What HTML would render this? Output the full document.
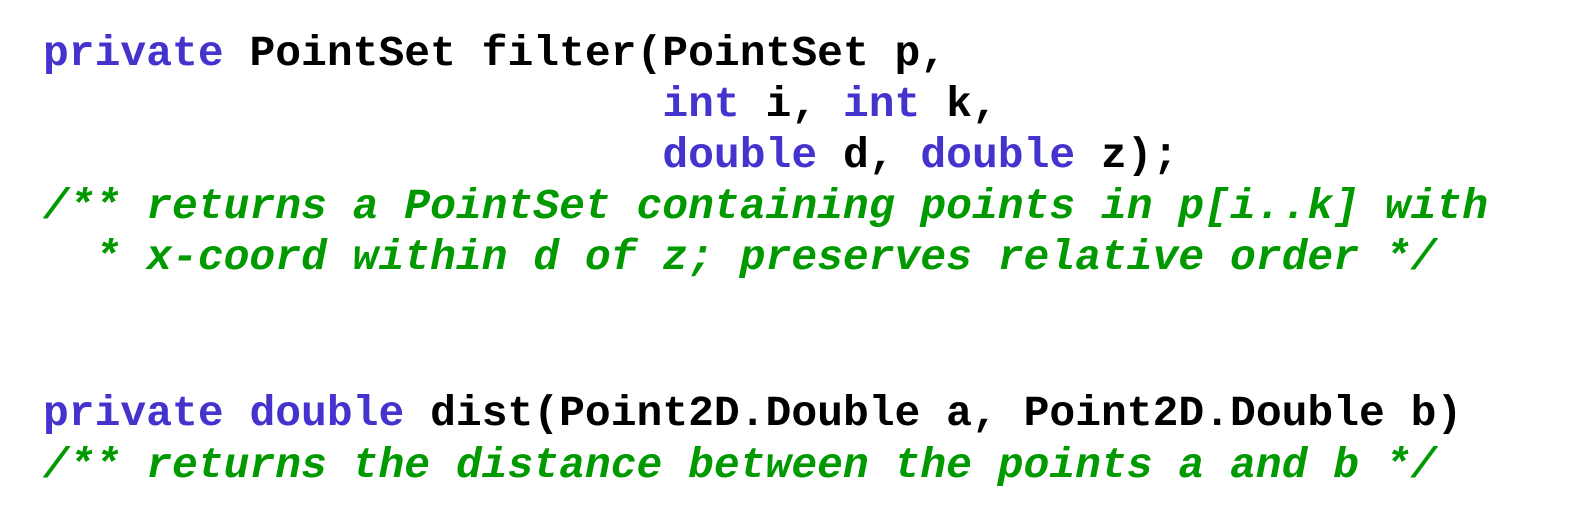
<!DOCTYPE html>
<html><head><style>
body{margin:0;background:#fff;width:1593px;height:528px;overflow:hidden;position:relative}
.l{position:absolute;left:43px;font-family:"Liberation Mono",monospace;font-weight:bold;font-size:43px;line-height:43px;white-space:pre;color:#000}
.k{color:#4433cc}.c{color:#009900;font-style:italic}
</style></head><body>
<div class="l" style="top:32px"><span class="k">private</span> PointSet filter(PointSet p,</div>
<div class="l" style="top:83px">                        <span class="k">int</span> i, <span class="k">int</span> k,</div>
<div class="l" style="top:134px">                        <span class="k">double</span> d, <span class="k">double</span> z);</div>
<div class="l c" style="top:185px">/** returns a PointSet containing points in p[i..k] with</div>
<div class="l c" style="top:236px">  * x-coord within d of z; preserves relative order */</div>
<div class="l" style="top:392px"><span class="k">private</span> <span class="k">double</span> dist(Point2D.Double a, Point2D.Double b)</div>
<div class="l c" style="top:444px">/** returns the distance between the points a and b */</div>
</body></html>
